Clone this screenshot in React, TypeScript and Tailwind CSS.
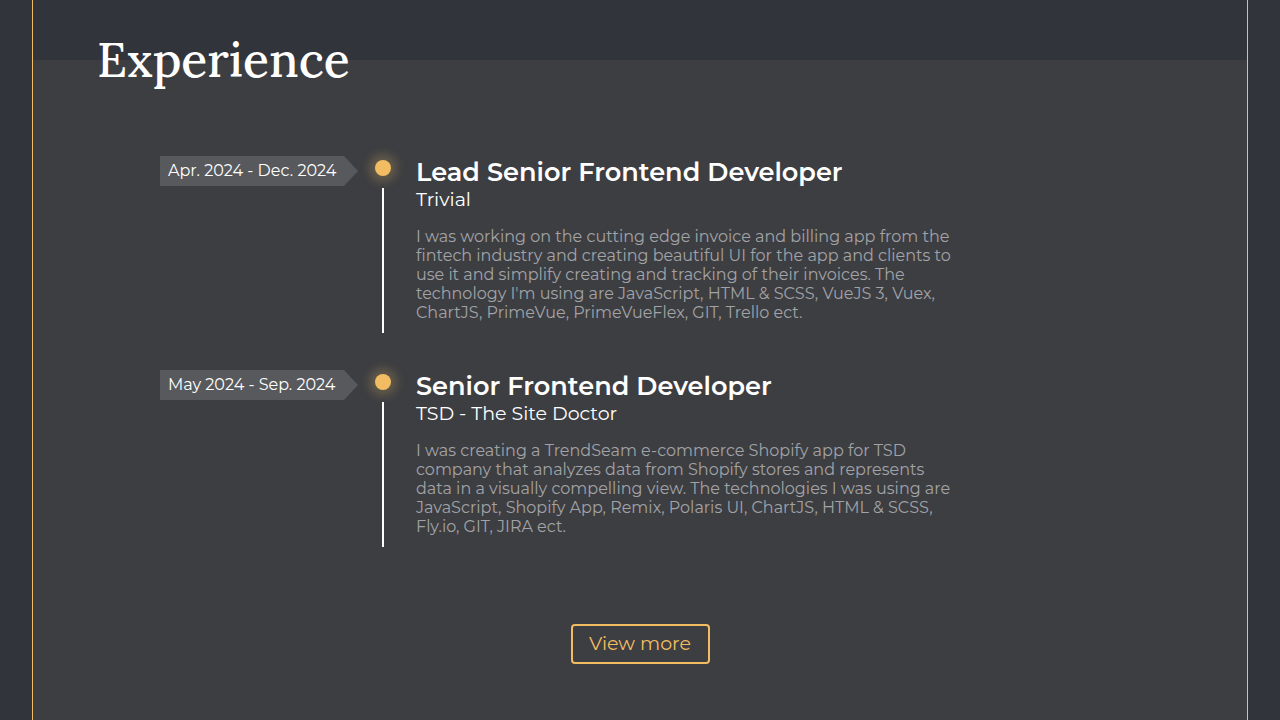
import React from 'react';

type Job = {
  period: string;
  title: string;
  company: string;
  text: string;
};

const jobs: Job[] = [
  {
    period: 'Apr. 2024 - Dec. 2024',
    title: 'Lead Senior Frontend Developer',
    company: 'Trivial',
    text: "I was working on the cutting edge invoice and billing app from the fintech industry and creating beautiful UI for the app and clients to use it and simplify creating and tracking of their invoices. The technology I'm using are JavaScript, HTML & SCSS, VueJS 3, Vuex, ChartJS, PrimeVue, PrimeVueFlex, GIT, Trello ect.",
  },
  {
    period: 'May 2024 - Sep. 2024',
    title: 'Senior Frontend Developer',
    company: 'TSD - The Site Doctor',
    text: 'I was creating a TrendSeam e-commerce Shopify app for TSD company that analyzes data from Shopify stores and represents data in a visually compelling view. The technologies I was using are JavaScript, Shopify App, Remix, Polaris UI, ChartJS, HTML & SCSS, Fly.io, GIT, JIRA ect.',
  },
];

const TimelineItem = ({ job }: { job: Job }) => (
  <div className="flex h-[214px]">
    <div className="w-[198px] h-[30px] bg-[#58595d] text-white text-[16px] flex items-center pl-2 [clip-path:polygon(0_0,184px_0,198px_50%,184px_100%,0_100%)]">
      {job.period}
    </div>
    <div className="ml-[17px] flex flex-col items-center w-4">
      <div className="mt-1 w-4 h-4 rounded-full bg-[#f2bd62] shadow-[0_0_10px_6px_rgba(242,189,98,0.22)]" />
      <div className="mt-3 w-[2px] h-[145px] bg-white" />
    </div>
    <div className="ml-[25px] w-[540px]">
      <h3 className="text-white text-[25.6px] font-semibold leading-8">{job.title}</h3>
      <p className="text-white text-[19px] leading-6">{job.company}</p>
      <p className="mt-[15px] text-[#a2a3a7] text-[16px] leading-[19px]">{job.text}</p>
    </div>
  </div>
);

const App = () => {
  return (
    <div className="min-h-[720px] bg-[#32343c] font-['Montserrat','Open_Sans',sans-serif]">
      <div className="mx-8 min-h-[720px] border-x border-[#f2bd62] bg-[linear-gradient(#32343c_0,#32343c_60px,#3d3e42_60px)]">
        <h2 className="pl-16 pt-[30px] text-white text-[48px] font-medium leading-[60px] font-['Lora','Liberation_Serif',serif]">
          Experience
        </h2>
        <div className="mt-[66px] pl-[127px]">
          {jobs.map((job) => (
            <TimelineItem key={job.title} job={job} />
          ))}
        </div>
        <div className="flex justify-center mt-[40px]">
          <button className="w-[139px] h-[40px] border-2 border-[#f2bd62] rounded text-[#f2bd62] text-[19px]">
            View more
          </button>
        </div>
      </div>
    </div>
  );
};

export default App;
